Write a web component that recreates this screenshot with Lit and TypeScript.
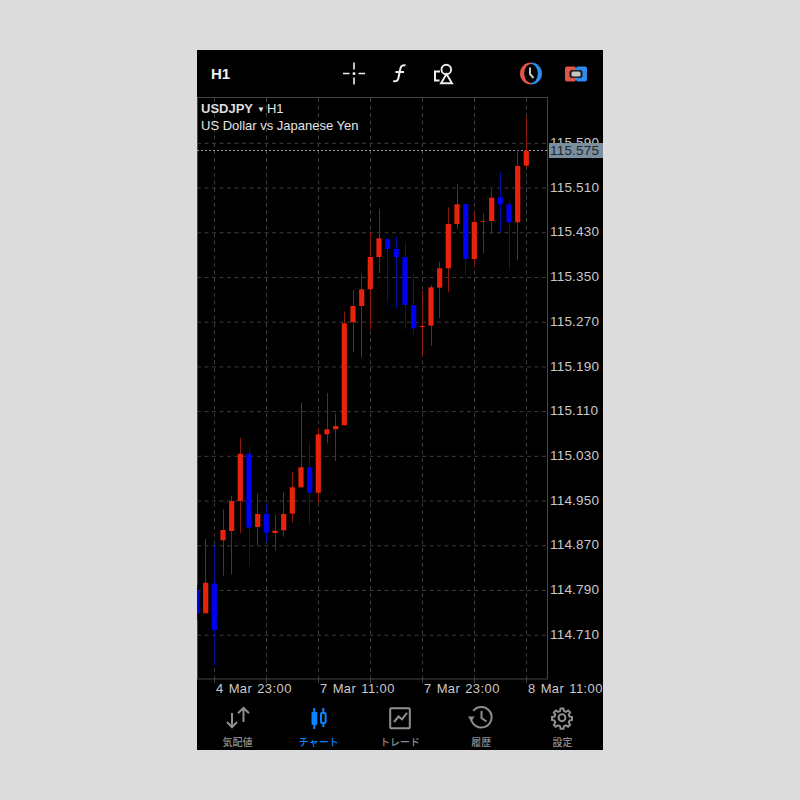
import { LitElement, html, css, svg } from "lit";
import { customElement } from "lit/decorators.js";

type C = [number, number, number, number, number, "r" | "b"];
// centre x, wick top, body top, body bottom, wick bottom, colour
const candles: C[] = [
  [197, 585, 590, 613.3, 620, "b"],
  [205.7, 539, 582.7, 613.3, 613.3, "r"],
  [214.3, 545.7, 583.7, 630, 665, "b"],
  [223, 509.3, 530, 540.3, 575.7, "r"],
  [231.7, 495.7, 501, 531, 574.3, "r"],
  [240.3, 437.7, 453.7, 501, 533, "r"],
  [249, 446.7, 453.7, 527.7, 565.7, "b"],
  [257.7, 493.7, 514, 527, 545.7, "r"],
  [266.3, 503.3, 514, 532.7, 541.7, "b"],
  [275, 514.3, 530.7, 533, 550.7, "r"],
  [283.7, 492.3, 514, 530.3, 536.7, "r"],
  [292.3, 471.7, 487.3, 513.7, 522.3, "r"],
  [301, 402.7, 467.3, 487.3, 488.3, "r"],
  [309.7, 441.7, 467.3, 492.7, 525, "b"],
  [318.3, 428.3, 434.3, 492.7, 502.7, "r"],
  [327, 393, 429.3, 434.3, 443.3, "r"],
  [335.7, 413.3, 426, 429.3, 461, "r"],
  [344.3, 311.7, 323.3, 425.3, 425.3, "r"],
  [353, 290, 306, 322.3, 352.3, "r"],
  [361.7, 274, 289.3, 306, 357.7, "r"],
  [370.3, 231.7, 257, 289.3, 329.3, "r"],
  [379, 208.7, 238.3, 257, 273.3, "r"],
  [387.7, 238.3, 239, 249, 301.7, "b"],
  [396.3, 236.7, 249, 257, 308.3, "b"],
  [405, 241.7, 257, 305, 329.3, "b"],
  [413.7, 273.3, 305.3, 328.3, 335, "b"],
  [422.3, 291, 326, 327, 356, "r"],
  [431, 285, 287.3, 325.7, 345.7, "r"],
  [439.7, 261.7, 268.3, 287.7, 318.3, "r"],
  [448.3, 207.3, 224, 268.3, 292.3, "r"],
  [457, 184.3, 204.3, 224, 229, "r"],
  [465.7, 204, 204, 259, 275.7, "b"],
  [474.3, 211.7, 222, 259, 266.7, "r"],
  [483, 213.3, 221.2, 222, 253.3, "r"],
  [491.7, 189.3, 197.7, 221, 233.3, "r"],
  [500.3, 172.3, 197.3, 204.3, 231.7, "b"],
  [509, 200.7, 204.3, 222.3, 270, "b"],
  [517.7, 149.3, 166, 222.3, 260, "r"],
  [526.3, 116.7, 150.7, 165.7, 168.3, "r"],
];

const prices = ["115.590", "115.510", "115.430", "115.350", "115.270", "115.190", "115.110", "115.030", "114.950", "114.870", "114.790", "114.710"];
const ticks = [214, 266, 318, 370, 422, 474, 526];
const times: [number, string][] = [[216, "4 Mar 23:00"], [320, "7 Mar 11:00"], [424, "7 Mar 23:00"], [528, "8 Mar 11:00"]];
const gridY = (i: number) => 143.3 + i * 44.72;

const tabIcons = [
  svg`<path d="M9 11v14M4 20l5 5.200 5-5.200M20.500 20V6M15 11.200 20.500 6 26 11.200" />`,
  svg`<path d="M10.300 6v21M19.300 6v19" /><rect class="solid" x="7.500" y="10" width="5.800" height="13" rx="1" stroke="none" /><rect class="tabfill" x="17" y="11" width="4.600" height="10" rx="1" />`,
  svg`<rect x="5.200" y="6.200" width="19.600" height="20" rx="1" /><path d="M9 20l4.500-5.500 3.500 2.800 5-6.500" />`,
  svg`<path d="M7.200 8.800A10.300 10.300 0 1 1 5 16M15.500 9v7l5 3.500" /><path class="solid" d="M2 14.500h6.600L5.200 19.500z" stroke="none" />`,
  svg`<g transform="translate(15 15.700) scale(.8) translate(-14.500 -15.500)" stroke-width="2.500"><path d="M12.700 4h3.600l.7 3.200 2.400 1 2.800-1.800 2.500 2.500-1.800 2.800 1 2.400 3.100.7v3.600l-3.100.7-1 2.400 1.800 2.800-2.500 2.500-2.800-1.800-2.400 1-.7 3.200h-3.600l-.7-3.200-2.400-1-2.800 1.800-2.500-2.500 1.800-2.800-1-2.400-3.100-.7v-3.600l3.100-.7 1-2.400-1.800-2.800 2.500-2.500 2.800 1.800 2.400-1z" /><circle cx="14.500" cy="15.500" r="4.300" /></g>`,
];
const tabs = ["気配値", "チャート", "トレード", "履歴", "設定"];

@customElement("app-root")
export class AppRoot extends LitElement {
  static styles = css`
    :host { display: flex; justify-content: center; align-items: center; height: 800px; background: #dcdcdc; }
    .phone { width: 406px; height: 700px; background: #000; display: flex; flex-direction: column; font-family: "Liberation Sans", Arial, sans-serif; overflow: hidden; }
    .top { height: 47px; display: flex; align-items: center; padding-left: 14px; box-sizing: border-box; }
    .sym { width: 128px; color: #f0f0f0; font-size: 15px; font-weight: 700; }
    .group { display: flex; gap: 15px; }
    .group.right { margin-left: 57px; }
    .ico { width: 30px; height: 30px; display: block; fill: none; stroke: #eee; stroke-width: 1.6; }
    .ico.plain { stroke: none; }
    .chart { position: relative; height: 603px; }
    .chart svg { display: block; width: 406px; height: 603px; }
    .title { position: absolute; left: 4px; top: 4px; color: #e6e6e6; font-size: 13px; line-height: 16px; }
    .title .s { font-weight: 700; color: #dcdcdc; }
    .title .tri { font-size: 8px; margin: 0 2px 0 4px; vertical-align: 1px; }
    .frame { fill: none; stroke: #454545; stroke-width: 1; }
    .grid { stroke: #3c3c3c; stroke-width: 1; stroke-dasharray: 4 3.500; }
    .cur { stroke: #8fa5b5; stroke-width: 1; stroke-dasharray: 2 2; }
    .ws-r { stroke: #8a1a0c; stroke-width: 1; }
    .ws-b { stroke: #000ea8; stroke-width: 1; }
    .bd-r { fill: #e8220d; }
    .bd-b { fill: #0000f5; }
    .lbl { fill: #c9c9c9; font-size: 13.500px; font-family: "Liberation Sans", Arial, sans-serif; letter-spacing: 0.2px; }
    .lbl.t { font-size: 13px; letter-spacing: 0.4px; word-spacing: 1px; }
    .curbg { fill: #7c8f9f; }
    .lbl.curt { fill: #1d2730; }
    .tabs { flex: 1; display: grid; grid-template-columns: repeat(5, 1fr); }
    .tab { display: flex; flex-direction: column; align-items: center; color: #8e8e8e; font-family: "Liberation Sans", "Noto Sans CJK JP", sans-serif; font-size: 10px; font-weight: 500; line-height: 13px; }
    .tab svg { width: 30px; height: 30px; margin-top: 2px; margin-bottom: 4px; fill: none; stroke: #8e8e8e; stroke-width: 2; display: block; }
    .tab svg .solid { fill: #8e8e8e; }
    .tab.on { color: #0a84ff; }
    .tab.on svg { stroke: #0a84ff; }
    .tab.on svg .solid { fill: #0a84ff; }
    .tab svg .tabfill { fill: #000; }
  `;

  render() {
    const w = 5.2;
    return html`<div class="phone">
      <div class="top">
        <div class="sym">H1</div>
        <div class="group">
          <svg class="ico" viewBox="0 0 30 30"><path d="M4 14.500h6.500M19.500 14.500H26M15 3.500v7M15 18.500v7" /><circle cx="15" cy="14.500" r=".7" /></svg>
          <svg class="ico" viewBox="0 0 30 30"><path d="M21.500 6.500c-2.500-1-4.500.2-5 2.500l-2.200 10.500c-.5 2.300-2.300 3.500-5 2.500M11.500 13h8.500" stroke-width="2" /></svg>
          <svg class="ico" viewBox="0 0 30 30"><path d="M11 12.500H6v9h4.500" stroke-width="2" /><circle cx="17.300" cy="10.500" r="4.800" stroke-width="1.900" /><path d="M17.500 15 12 24.200h11z" stroke-width="1.900" /></svg>
        </div>
        <div class="group right">
          <svg class="ico plain" viewBox="0 0 30 30">
            <path d="M15 3.500a11 11 0 0 0 0 22z" fill="#e05548" />
            <path d="M15 3.500a11 11 0 0 1 0 22z" fill="#2f8bf0" />
            <ellipse cx="15" cy="14.500" rx="6.800" ry="9.500" fill="#000" />
            <path d="M14 8.500v6.500l3.500 4" fill="none" stroke="#c4c4c4" stroke-width="2" />
          </svg>
          <svg class="ico plain" viewBox="0 0 30 30">
            <rect x="4" y="7.500" width="11" height="15" rx="2" fill="#e05548" />
            <rect x="15" y="7.500" width="11" height="15" rx="2" fill="#2f8bf0" />
            <rect x="8.500" y="11" width="13" height="8" rx="2.500" fill="#1c1c1c" />
            <rect x="10.500" y="12.500" width="9" height="5" rx="1.500" fill="#c4c4c4" />
          </svg>
        </div>
      </div>
      <div class="chart">
        <svg viewBox="197 97 406 603">
          ${prices.map((_, i) => svg`<line class="grid" x1="197" x2="547" y1=${gridY(i)} y2=${gridY(i)} />`)}
          ${ticks.map((x) => svg`<line class="grid" x1=${x + 0.5} x2=${x + 0.5} y1="98" y2="679" />`)}
          <rect class="frame" x="197.500" y="97.500" width="350" height="581.500" />
          <line class="cur" x1="197" x2="548" y1="150.500" y2="150.500" />
          ${candles.map(([x, wt, bt, bb, wb, c]) => svg`
            <line class="ws-${c}" x1=${Math.floor(x) + 0.5} x2=${Math.floor(x) + 0.5} y1=${wt} y2=${wb} />
            <rect class="bd-${c}" x=${x - w / 2} y=${bt} width=${w} height=${bb - bt} />`)}
          ${prices.map((p, i) => svg`<text class="lbl" x="550" y=${gridY(i) + 3.700}>${p}</text>`)}
          <rect class="curbg" x="549" y="143" width="54" height="15" />
          <text class="lbl curt" x="550" y="155">115.575</text>
          ${ticks.map((x) => svg`<line class="frame" x1=${x + 0.5} x2=${x + 0.5} y1="679" y2="683" />`)}
          ${times.map(([x, t]) => svg`<text class="lbl t" x=${x} y="693">${t}</text>`)}
        </svg>
        <div class="title">
          <div><span class="s">USDJPY</span><span class="tri">▼</span>H1</div>
          <div>US Dollar vs Japanese Yen</div>
        </div>
      </div>
      <div class="tabs">
        ${tabs.map((t, i) => html`<div class="tab ${i === 1 ? "on" : ""}">
          <svg viewBox="0 0 30 30">${tabIcons[i]}</svg>
          <div>${t}</div>
        </div>`)}
      </div>
    </div>`;
  }
}
